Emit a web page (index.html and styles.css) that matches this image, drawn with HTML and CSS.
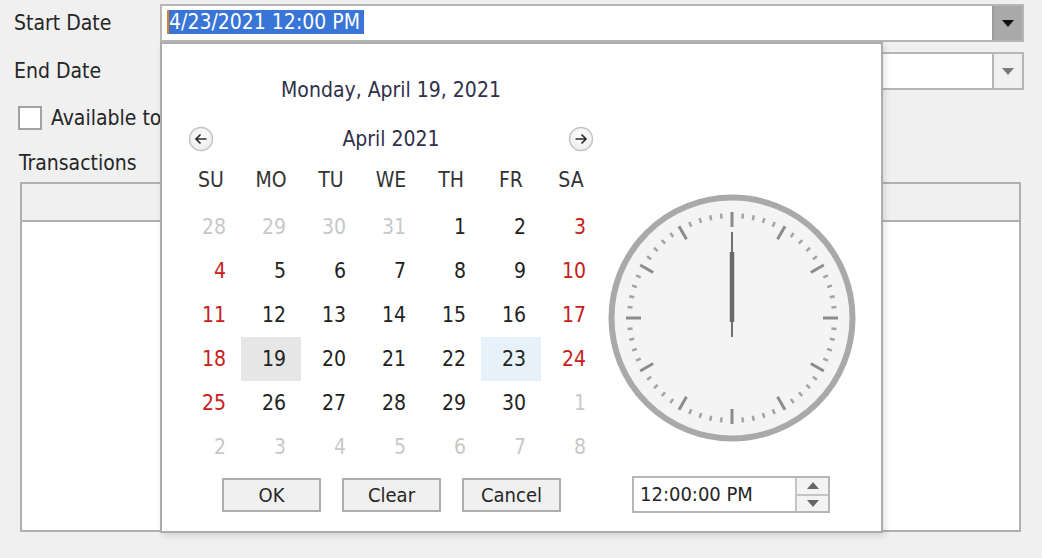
FILE: index.html
```html
<!DOCTYPE html>
<html lang="en">
<head>
  <meta charset="UTF-8">
  <title>Date Edit</title>
  <link rel="stylesheet" href="styles.css">
</head>
<body>
  <div class="form">
    <div class="field-row">
      <label class="field-label">Start Date</label>
      <div class="combo">
        <div class="combo-text"><span class="caret"></span><span class="selected">4/23/2021 12:00 PM</span></div>
        <div class="combo-btn pressed"><span class="tri"></span></div>
      </div>
    </div>
    <div class="field-row second">
      <label class="field-label">End Date</label>
      <div class="combo">
        <div class="combo-text"></div>
        <div class="combo-btn"><span class="tri"></span></div>
      </div>
    </div>
    <div class="check-row">
      <span class="checkbox"></span>
      <span>Available to All</span>
    </div>
    <div class="group-label">Transactions</div>
    <div class="grid">
      <div class="grid-header"></div>
      <div class="grid-body"></div>
    </div>
  </div>

  <div class="popup">
    <div class="popup-main">
      <div class="calendar">
        <div class="cal-title">Monday, April 19, 2021</div>
        <div class="cal-nav">
          <span class="nav-btn">
            <svg width="26" height="26" viewBox="0 0 26 26"><defs><radialGradient id="navFill" cx="0.5" cy="0.4" r="0.6"><stop offset="0" stop-color="#fff"/><stop offset="1" stop-color="#ececec"/></radialGradient></defs><circle cx="13" cy="13" r="11.5" fill="url(#navFill)" stroke="#c2c2c2" stroke-width="1.4"/><path d="M18.5 13H8M12.5 8.5L8 13l4.5 4.5" fill="none" stroke="#2d2d2d" stroke-width="1.7"/></svg>
          </span>
          <span class="cal-month">April 2021</span>
          <span class="nav-btn">
            <svg width="26" height="26" viewBox="0 0 26 26"><circle cx="13" cy="13" r="11.5" fill="url(#navFill)" stroke="#c2c2c2" stroke-width="1.4"/><path d="M7.5 13H18M13.5 8.5L18 13l-4.5 4.5" fill="none" stroke="#2d2d2d" stroke-width="1.7"/></svg>
          </span>
        </div>
        <div class="cal-head">
          <span>SU</span><span>MO</span><span>TU</span><span>WE</span><span>TH</span><span>FR</span><span>SA</span>
        </div>
        <div class="cal-days">
          <span class="other">28</span><span class="other">29</span><span class="other">30</span><span class="other">31</span><span>1</span><span>2</span><span class="weekend">3</span>
          <span class="weekend">4</span><span>5</span><span>6</span><span>7</span><span>8</span><span>9</span><span class="weekend">10</span>
          <span class="weekend">11</span><span>12</span><span>13</span><span>14</span><span>15</span><span>16</span><span class="weekend">17</span>
          <span class="weekend">18</span><span class="today">19</span><span>20</span><span>21</span><span>22</span><span class="picked">23</span><span class="weekend">24</span>
          <span class="weekend">25</span><span>26</span><span>27</span><span>28</span><span>29</span><span>30</span><span class="other">1</span>
          <span class="other">2</span><span class="other">3</span><span class="other">4</span><span class="other">5</span><span class="other">6</span><span class="other">7</span><span class="other">8</span>
        </div>
      </div>
      <div class="clock">
        <svg width="250" height="250" viewBox="0 0 250 250">
          <circle cx="125" cy="125" r="120.5" fill="#f4f4f4" stroke="#a9a9a9" stroke-width="6"/>
          <g id="ticks"></g>
          <line x1="125" y1="39" x2="125" y2="144" stroke="#707070" stroke-width="2"/>
          <line x1="125" y1="59" x2="125" y2="129" stroke="#6a6a6a" stroke-width="4.5"/>
        </svg>
      </div>
    </div>
    <div class="popup-footer">
      <button class="btn">OK</button>
      <button class="btn">Clear</button>
      <button class="btn">Cancel</button>
      <div class="spin">
        <div class="spin-text">12:00:00 PM</div>
        <div class="spin-btns">
          <span class="spin-up"><span class="tri-up"></span></span>
          <span class="spin-down"><span class="tri-down"></span></span>
        </div>
      </div>
    </div>
  </div>

  <script>
    // clock face marks
    var ticks = document.getElementById("ticks");
    for (var i = 0; i < 60; i++) {
      var hour = i % 5 === 0;
      var line = document.createElementNS("http://www.w3.org/2000/svg", "line");
      line.setAttribute("x1", 125);
      line.setAttribute("y1", hour ? 19 : 20);
      line.setAttribute("x2", 125);
      line.setAttribute("y2", hour ? 34 : 25);
      line.setAttribute("stroke", hour ? "#8c8c8c" : "#a3a3a3");
      line.setAttribute("stroke-width", hour ? 3 : 2.5);
      line.setAttribute("transform", "rotate(" + (i * 6) + " 125 125)");
      ticks.appendChild(line);
    }
  </script>
</body>
</html>
```

FILE: styles.css
```css
* {
  margin: 0;
  padding: 0;
  box-sizing: border-box;
}

body {
  font-family: "DejaVu Sans Condensed", "Liberation Sans", sans-serif;
  font-size: 21px;
  color: #262626;
  background: #f0f0f0;
  width: 1042px;
  height: 558px;
  overflow: hidden;
}

/* form */
.form {
  padding-top: 4px;
}

.field-row {
  display: flex;
  align-items: center;
  height: 38px;
}

.field-row.second {
  margin-top: 10px;
}

.field-label {
  width: 160px;
  padding-left: 14px;
}

.combo {
  display: flex;
  width: 864px;
  height: 38px;
  border: 2px solid #b6b6b6;
  background: #fff;
}

.combo-text {
  flex: 1;
  display: flex;
  align-items: center;
  padding-left: 5px;
  padding-bottom: 2px;
}

.caret {
  width: 2px;
  height: 24px;
  background: #e07b2a;
}

.selected {
  display: inline-block;
  height: 24px;
  line-height: 24px;
  padding-right: 4px;
  background: #3875d7;
  color: #fff;
}

.combo-btn {
  width: 30px;
  display: flex;
  align-items: center;
  justify-content: center;
  border-left: 2px solid #b6b6b6;
  background: #f0f0f0;
}

.combo-btn .tri {
  width: 0;
  height: 0;
  border-left: 6px solid transparent;
  border-right: 6px solid transparent;
  border-top: 7px solid #7a7a7a;
}

.combo-btn.pressed {
  background: #a9a9a9;
  border-left-color: #9a9a9a;
}

.combo-btn.pressed .tri {
  border-top-color: #111;
}

.check-row {
  display: flex;
  align-items: center;
  gap: 9px;
  margin-top: 16px;
  padding-left: 18px;
  height: 24px;
}

.checkbox {
  width: 24px;
  height: 24px;
  border: 2px solid #a2a2a2;
  background: #fff;
}

.group-label {
  margin-top: 22px;
  padding-left: 19px;
  height: 22px;
  line-height: 22px;
}

.grid {
  margin-top: 8px;
  margin-left: 20px;
  width: 1001px;
  height: 350px;
  border: 2px solid #b0b0b0;
  background: #fff;
}

.grid-header {
  height: 38px;
  background: #f0f0f0;
  border-bottom: 2px solid #b0b0b0;
}

/* dropdown calendar */
.popup {
  position: absolute;
  left: 160px;
  top: 42px;
  width: 723px;
  height: 491px;
  background: #fff;
  border: 2px solid #acacac;
  box-shadow: 2px 3px 6px rgba(0, 0, 0, 0.12);
}

.popup-main {
  display: flex;
  height: 425px;
}

.calendar {
  margin-left: 19px;
  width: 420px;
  padding-top: 28px;
}

.cal-title {
  height: 36px;
  line-height: 36px;
  text-align: center;
  color: #30304a;
}

.cal-nav {
  display: flex;
  align-items: center;
  justify-content: space-between;
  height: 36px;
  margin-top: 13px;
  padding: 0 7px;
}

.nav-btn {
  display: flex;
  width: 26px;
  height: 26px;
}

.cal-month {
  color: #30304a;
}

.cal-head {
  display: grid;
  grid-template-columns: repeat(7, 60px);
  height: 44px;
  margin-top: 1px;
  align-items: center;
  text-align: center;
  color: #333;
}

.cal-days {
  display: grid;
  grid-template-columns: repeat(7, 60px);
  grid-auto-rows: 44px;
  margin-top: 3px;
}

.cal-days span {
  display: flex;
  align-items: center;
  justify-content: flex-end;
  padding-right: 15px;
  color: #222;
}

.cal-days .weekend {
  color: #c62020;
}

.cal-days .other {
  color: #c8c8c8;
}

.cal-days .today {
  background: #e6e6e6;
}

.cal-days .picked {
  background: #e6f1fa;
}

.clock {
  margin-left: 6px;
  margin-top: 149px;
  width: 250px;
  height: 250px;
}

.clock svg {
  display: block;
}

.popup-footer {
  display: flex;
  align-items: center;
  gap: 21px;
  padding-left: 60px;
  margin-top: 7px;
}

.btn {
  width: 99px;
  height: 34px;
  font-family: inherit;
  font-size: 20px;
  color: #262626;
  background: #f0f0f0;
  border: 2px solid #adadad;
}

.spin {
  display: flex;
  margin-left: 50px;
  width: 198px;
  height: 37px;
  border: 2px solid #b6b6b6;
  background: #fff;
}

.spin-text {
  flex: 1;
  padding-left: 6px;
  line-height: 33px;
  font-size: 20px;
}

.spin-btns {
  width: 33px;
  display: flex;
  flex-direction: column;
  border-left: 2px solid #c4c4c4;
}

.spin-up,
.spin-down {
  flex: 1;
  display: flex;
  align-items: center;
  justify-content: center;
  background: #f3f3f3;
}

.spin-up {
  border-bottom: 2px solid #c4c4c4;
}

.tri-up {
  border-left: 6px solid transparent;
  border-right: 6px solid transparent;
  border-bottom: 7px solid #666;
}

.tri-down {
  border-left: 6px solid transparent;
  border-right: 6px solid transparent;
  border-top: 7px solid #666;
}
```
